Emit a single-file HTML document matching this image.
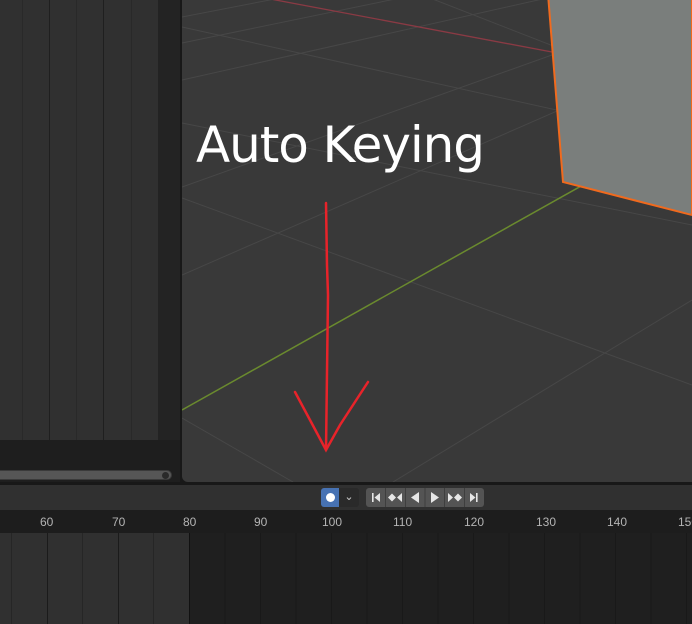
<!DOCTYPE html>
<html><head><style>
*{margin:0;padding:0;box-sizing:border-box}
body{width:692px;height:624px;overflow:hidden;background:#181818;position:relative;font-family:"Liberation Sans",sans-serif}
.a{position:absolute}
</style></head><body>
<!-- left panel -->
<div class="a" style="left:0;top:0;width:158px;height:440px;background:#303030"></div>
<div class="a" style="left:22px;top:0;width:1px;height:440px;background:#292929"></div>
<div class="a" style="left:49px;top:0;width:1px;height:440px;background:#1f1f1f"></div>
<div class="a" style="left:76px;top:0;width:1px;height:440px;background:#292929"></div>
<div class="a" style="left:103px;top:0;width:1px;height:440px;background:#1f1f1f"></div>
<div class="a" style="left:131px;top:0;width:1px;height:440px;background:#292929"></div>
<div class="a" style="left:158px;top:0;width:22px;height:440px;background:#232323"></div>
<div class="a" style="left:0;top:440px;width:180px;height:42px;background:#1e1e1e"></div>
<div class="a" style="left:-10px;top:470px;width:182px;height:10px;border-radius:5px;background:#565656;border:1px solid #3a3a3a"></div>
<div class="a" style="left:162px;top:472px;width:7px;height:7px;border-radius:50%;background:#2a2a2a"></div>
<!-- viewport -->
<div class="a" style="left:182px;top:-6px;width:520px;height:488px;border-radius:6px;background:#393939;overflow:hidden">
<svg width="510" height="488" viewBox="182 -6 510 488" style="position:absolute;left:0;top:0">
<g stroke="#474747" stroke-width="1" fill="none">
<line x1="182" y1="17" x2="280" y2="-2"/>
<line x1="182" y1="43" x2="400" y2="-2"/>
<line x1="182" y1="80" x2="547" y2="-2"/>
<line x1="182" y1="187" x2="692" y2="5"/>
<line x1="182" y1="275" x2="692" y2="52"/>
<line x1="182" y1="27" x2="692" y2="140"/>
<line x1="182" y1="123" x2="692" y2="225"/>
<line x1="182" y1="198" x2="692" y2="385"/>
<line x1="182" y1="418" x2="293" y2="482"/>
<line x1="692" y1="300" x2="393" y2="482"/>
<line x1="430" y1="-2" x2="692" y2="100"/>
</g>
<line x1="265" y1="-2" x2="552" y2="52" stroke="#8a3a44" stroke-width="1.3"/>
<line x1="182" y1="410" x2="672" y2="135" stroke="#6a8a2e" stroke-width="1.5"/>
<polygon points="548,-6 563,182 692,215 692,-6" fill="#7a7e7c" stroke="#f06a1e" stroke-width="2"/>
<g stroke="#e8232a" stroke-width="2.5" fill="none" stroke-linecap="round">
<path d="M326,203 L327,265 L328,295 L326,450"/>
<path d="M295,392 L310,420 L326,450 L340,425 L368,382"/>
</g>
</svg>
<div class="a" style="left:14px;top:121px;font-size:50px;color:#fff;font-family:'DejaVu Sans','Liberation Sans',sans-serif;letter-spacing:-1.1px;white-space:nowrap;line-height:60px">Auto Keying</div>
</div>
<!-- timeline header -->
<div class="a" style="left:0;top:485px;width:692px;height:25px;background:#303030"></div>
<div class="a" style="left:321px;top:488px;width:18px;height:19px;background:#4772b3;border-radius:3px 0 0 3px"></div>
<div class="a" style="left:326px;top:493px;width:9px;height:9px;border-radius:50%;background:#fff"></div>
<div class="a" style="left:339px;top:488px;width:20px;height:19px;background:#2a2a2a;border-radius:0 3px 3px 0;color:#ccc;font-size:11px;text-align:center;line-height:18px">⌄</div>
<div class="a" style="left:366px;top:488px;width:118px;height:19px;background:#545454;border-radius:3px"></div>
<svg class="a" style="left:366px;top:488px" width="118" height="19" viewBox="0 0 118 19">
<g stroke="#3e3e3e"><line x1="19.5" y1="0" x2="19.5" y2="19"/><line x1="39.5" y1="0" x2="39.5" y2="19"/><line x1="59" y1="0" x2="59" y2="19"/><line x1="78.5" y1="0" x2="78.5" y2="19"/><line x1="98.5" y1="0" x2="98.5" y2="19"/></g>
<g fill="#e6e6e6">
<rect x="6" y="5" width="1.6" height="9"/><polygon points="14,5 14,14 8.5,9.5"/>
<polygon points="22,9.5 26,5.5 30,9.5 26,13.5"/><polygon points="36,5 36,14 31,9.5"/>
<polygon points="53,4 53,15 45,9.5"/>
<polygon points="65,4 65,15 73,9.5"/>
<polygon points="82,5 82,14 87,9.5"/><polygon points="88,9.5 92,5.5 96,9.5 92,13.5"/>
<polygon points="104,5 104,14 109.5,9.5"/><rect x="110" y="5" width="1.6" height="9"/>
</g></svg>
<!-- ruler -->
<div class="a" style="left:0;top:510px;width:692px;height:23px;background:#1d1d1d"></div>
<div class="a" style="left:0;top:515px;width:692px;font-size:12px;color:#b4b4b4;height:14px">
<span class="a" style="left:40px">60</span><span class="a" style="left:112px">70</span><span class="a" style="left:183px">80</span><span class="a" style="left:254px">90</span><span class="a" style="left:322px">100</span><span class="a" style="left:393px">110</span><span class="a" style="left:464px">120</span><span class="a" style="left:536px">130</span><span class="a" style="left:607px">140</span><span class="a" style="left:678px">150</span>
</div>
<!-- body -->
<div class="a" style="left:0;top:533px;width:189px;height:91px;background:#303030"></div>
<div class="a" style="left:189px;top:533px;width:503px;height:91px;background:#1f1f1f"></div>
<svg class="a" style="left:0;top:533px" width="692" height="91">
<g stroke-width="1">
<line x1="11.5" y1="0" x2="11.5" y2="91" stroke="#262626"/>
<line x1="47.5" y1="0" x2="47.5" y2="91" stroke="#1b1b1b"/>
<line x1="82.5" y1="0" x2="82.5" y2="91" stroke="#262626"/>
<line x1="118.5" y1="0" x2="118.5" y2="91" stroke="#1b1b1b"/>
<line x1="153.5" y1="0" x2="153.5" y2="91" stroke="#262626"/>
<line x1="189.5" y1="0" x2="189.5" y2="91" stroke="#111"/>
<g stroke="#191919">
<line x1="225" y1="0" x2="225" y2="91"/><line x1="260.5" y1="0" x2="260.5" y2="91"/><line x1="296" y1="0" x2="296" y2="91"/><line x1="331.5" y1="0" x2="331.5" y2="91"/><line x1="367" y1="0" x2="367" y2="91"/><line x1="402.5" y1="0" x2="402.5" y2="91"/><line x1="438" y1="0" x2="438" y2="91"/><line x1="473.5" y1="0" x2="473.5" y2="91"/><line x1="509" y1="0" x2="509" y2="91"/><line x1="544.5" y1="0" x2="544.5" y2="91"/><line x1="580" y1="0" x2="580" y2="91"/><line x1="615.5" y1="0" x2="615.5" y2="91"/><line x1="651" y1="0" x2="651" y2="91"/><line x1="686.5" y1="0" x2="686.5" y2="91"/>
</g></g></svg>
</body></html>
